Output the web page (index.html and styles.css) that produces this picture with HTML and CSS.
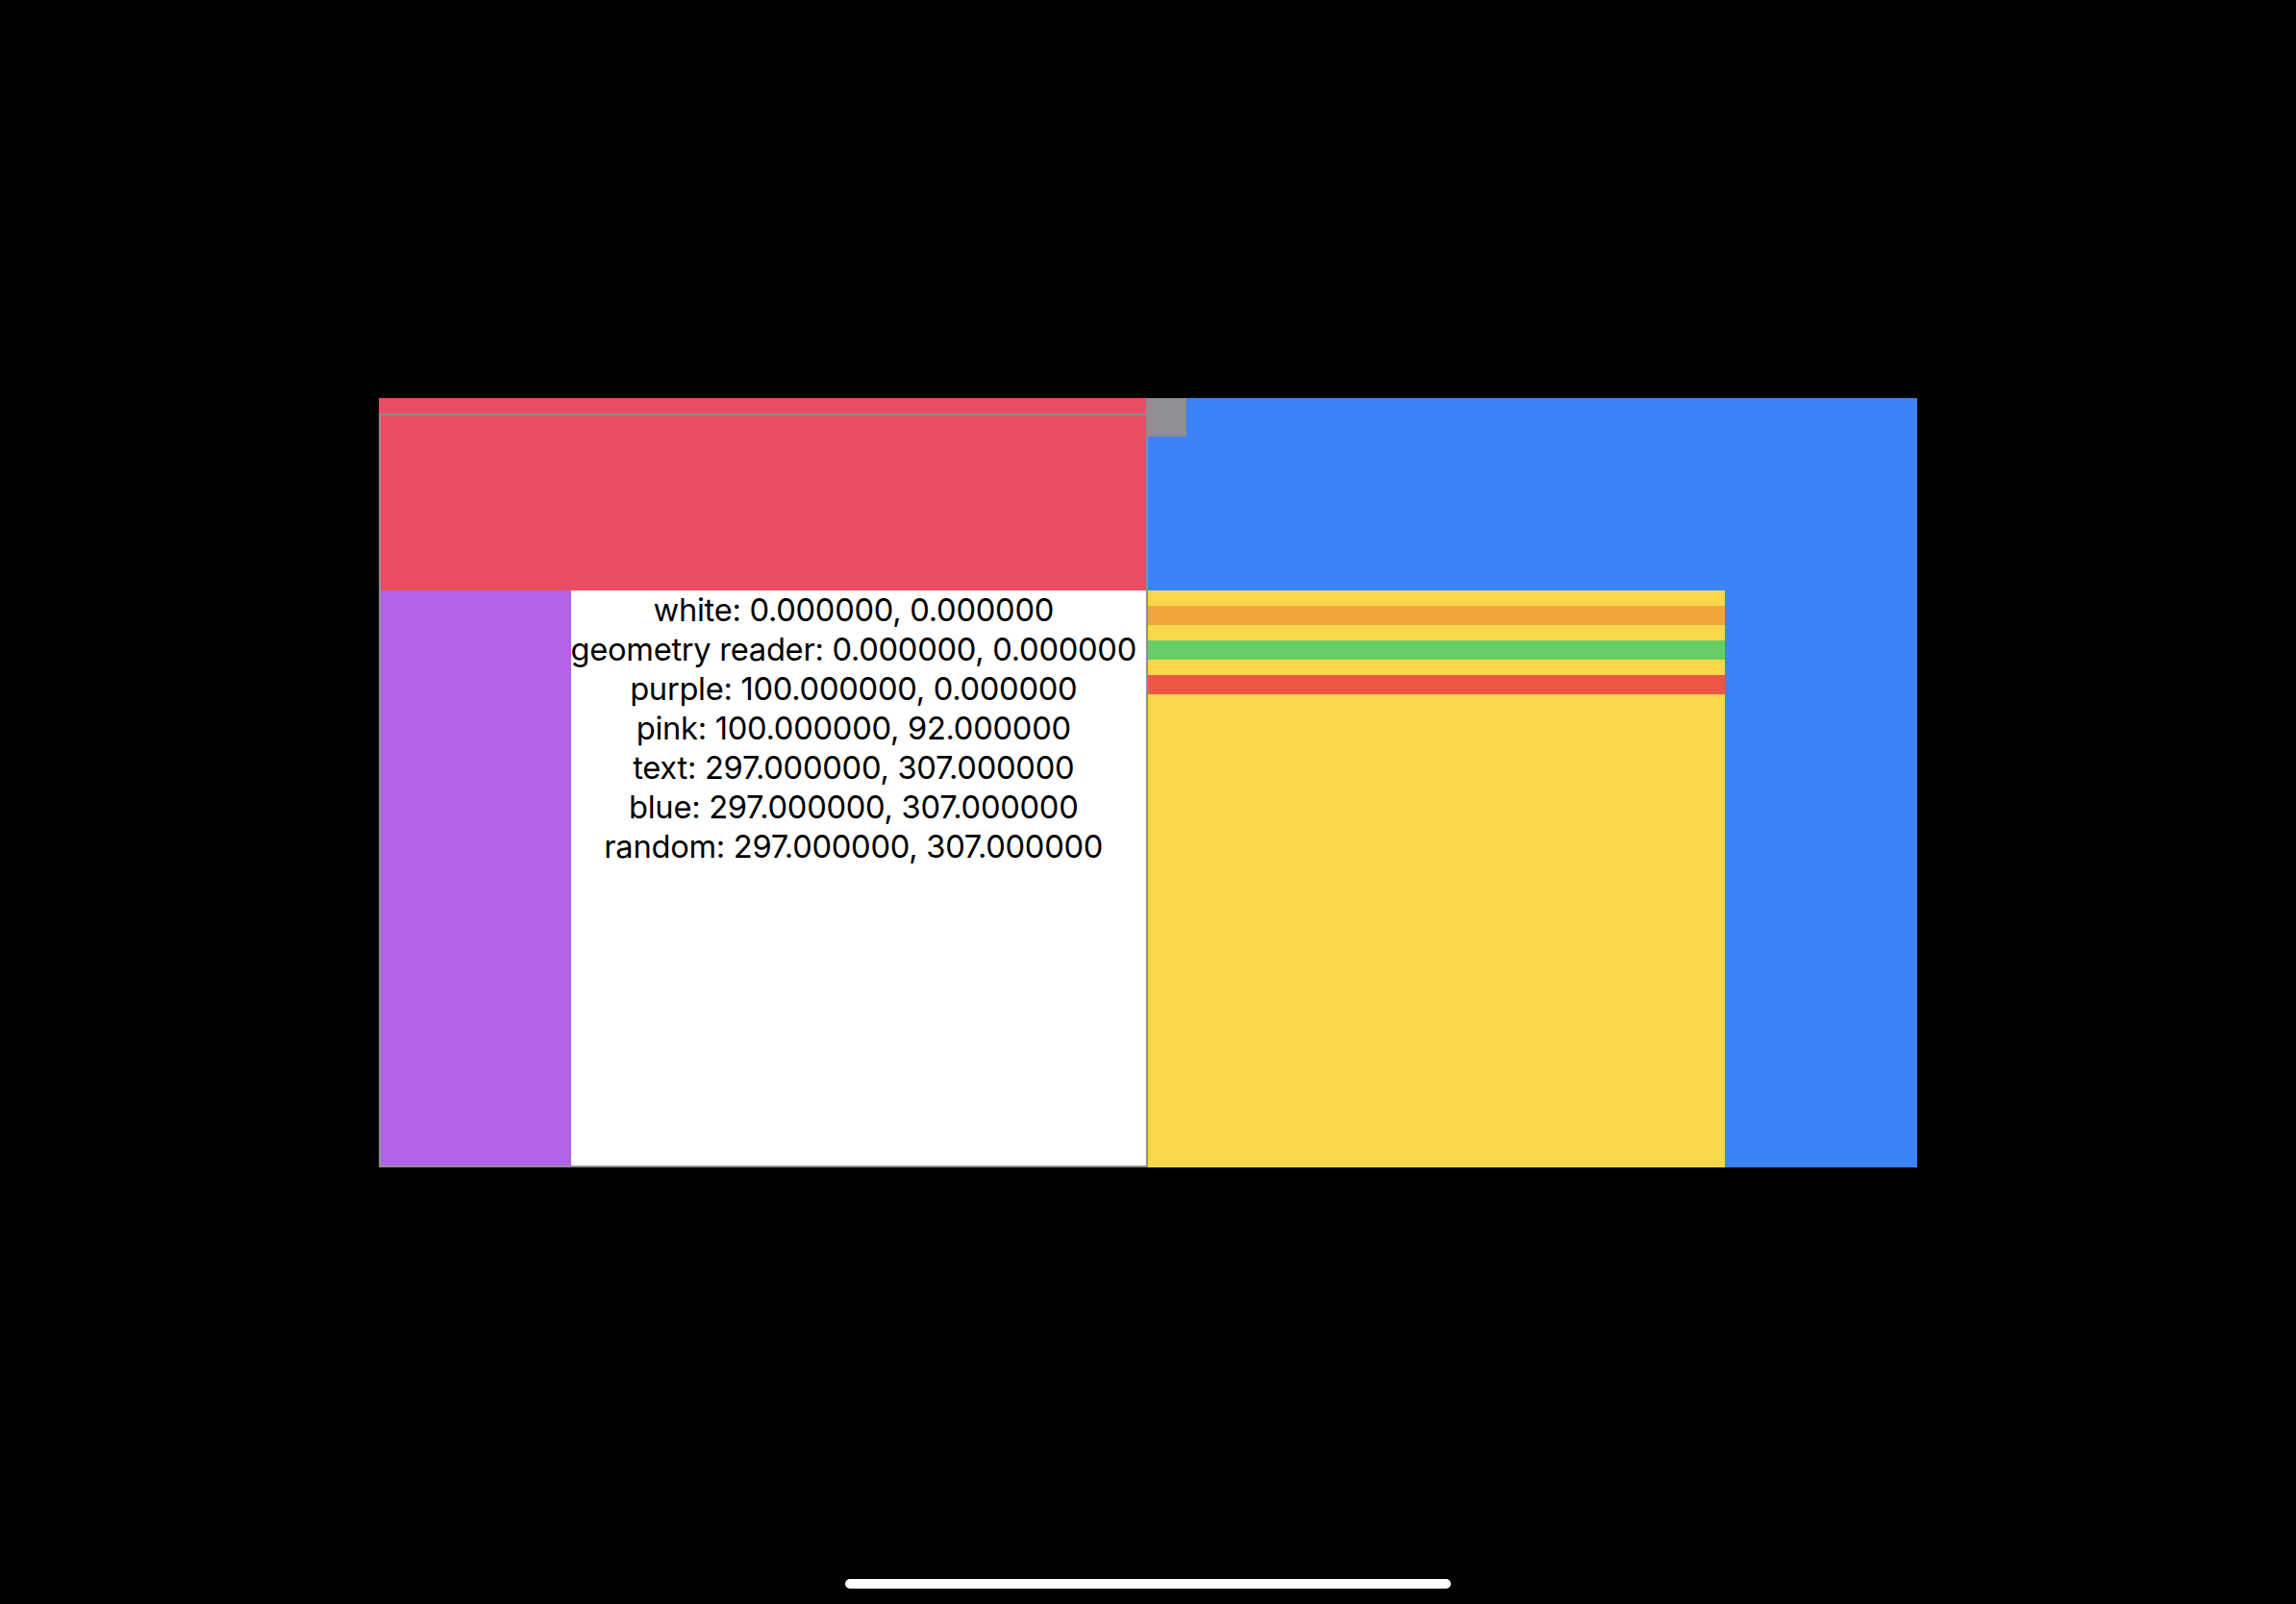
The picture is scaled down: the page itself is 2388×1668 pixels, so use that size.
FILE: index.html
```html
<!DOCTYPE html>
<html>
<head>
<meta charset="utf-8">
<link rel="stylesheet" href="styles.css">
</head>
<body>
<div class="screen">
  <div class="stage">
    <div class="left">
      <div class="red-strip"></div>
      <div class="frame">
        <div class="red-fill"></div>
        <div class="row">
          <div class="purple"></div>
          <div class="white">
            <div class="line">white: 0.000000, 0.000000</div>
            <div class="line">geometry reader: 0.000000, 0.000000</div>
            <div class="line">purple: 100.000000, 0.000000</div>
            <div class="line">pink: 100.000000, 92.000000</div>
            <div class="line">text: 297.000000, 307.000000</div>
            <div class="line">blue: 297.000000, 307.000000</div>
            <div class="line">random: 297.000000, 307.000000</div>
          </div>
        </div>
      </div>
    </div>
    <div class="right">
      <div class="gray-square"></div>
      <div class="yellow">
        <div class="stripe orange"></div>
        <div class="stripe green"></div>
        <div class="stripe redstripe"></div>
      </div>
    </div>
  </div>
  <div class="home-bar"></div>
</div>
</body>
</html>
```

FILE: styles.css
```css
html, body {
  margin: 0;
  padding: 0;
  background: #000;
}
.screen {
  width: 2388px;
  height: 1668px;
  background: #000;
  display: flex;
  flex-direction: column;
  align-items: center;
  overflow: hidden;
}
.stage {
  margin-top: 414px;
  width: 1600px;
  height: 800px;
  display: flex;
}
.left {
  width: 800px;
  height: 800px;
  display: flex;
  flex-direction: column;
  background: #e94c63;
}
.red-strip {
  height: 16px;
  background: #e94c63;
}
.frame {
  height: 784px;
  box-sizing: border-box;
  border: 2px solid #8e8e93;
  display: flex;
  flex-direction: column;
}
.red-fill {
  height: 182px;
  background: #e94c63;
}
.row {
  flex: 1;
  display: flex;
}
.purple {
  width: 198px;
  background: #b162e8;
}
.white {
  flex: 1;
  background: #fff;
  display: flex;
  flex-direction: column;
  align-items: center;
  padding-right: 10px;
  padding-top: 0;
  font-family: Inter, "Noto Sans", sans-serif;
  font-size: 32.7px;
  line-height: 41px;
  letter-spacing: -0.3px;
  color: #000;
}
.line {
  white-space: nowrap;
}
.right {
  width: 800px;
  height: 800px;
  background: #3b83f6;
  position: relative;
  padding-top: 200px;
  box-sizing: border-box;
}
.gray-square {
  position: absolute;
  left: -2px;
  top: 0;
  width: 42px;
  height: 40px;
  background: #8e8e93;
}
.yellow {
  width: 600px;
  height: 600px;
  background: #f8d84a;
  display: flex;
  flex-direction: column;
  padding-top: 16px;
  gap: 16px;
  box-sizing: border-box;
}
.stripe {
  height: 20px;
}
.orange { background: #f1a53b; }
.green { background: #67ce67; }
.redstripe { background: #eb5646; }
.home-bar {
  margin-top: 428px;
  width: 630px;
  height: 10px;
  border-radius: 5px;
  background: #fff;
}
```
